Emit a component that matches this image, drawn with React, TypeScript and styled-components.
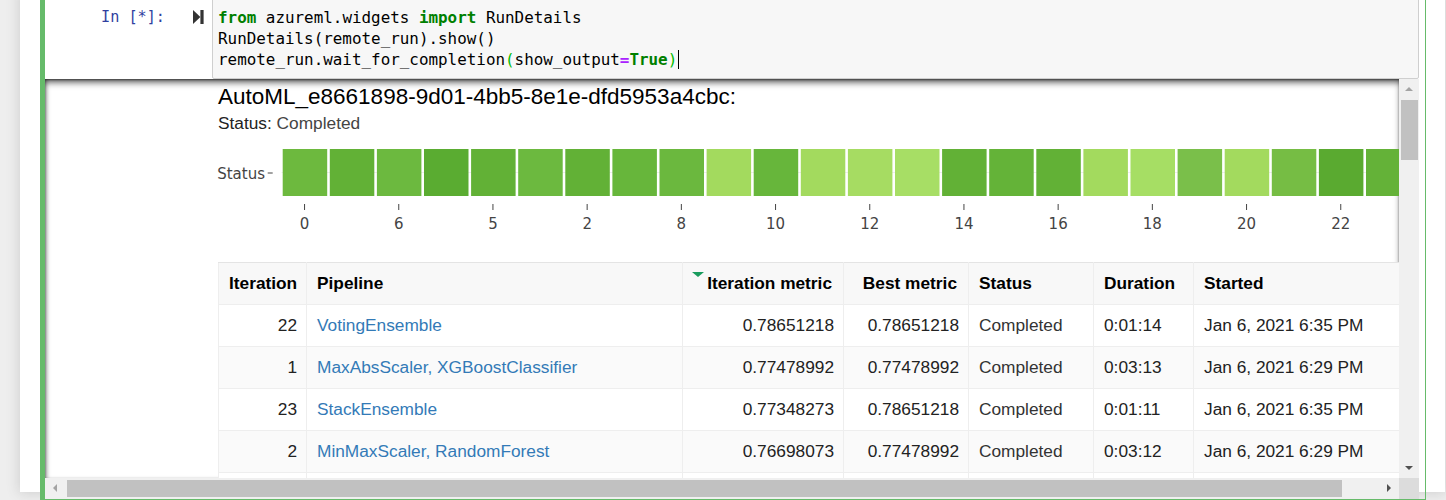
import styled, { createGlobalStyle } from 'styled-components';

const GlobalStyle = createGlobalStyle`
	html, body {
		margin: 0;
		padding: 0;
		background: #eee;
		overflow: hidden;
	}
	body {
		font-family: "Liberation Sans", Arial, sans-serif;
	}
`;

const Page = styled.div`
	height: 500px;
	overflow: hidden;
`;

const Notebook = styled.div`
	margin-left: 20px;
	width: 1425px;
	height: 100%;
	box-sizing: border-box;
	padding: 0 19px 0 20px;
	background: #fff;
	box-shadow: 0 0 12px 1px rgba(87, 87, 87, 0.2);
`;

const Cell = styled.div`
	margin-top: -8px;
	border: 1px solid #66bb6a;
	border-left: 5px solid #66bb6a;
	padding: 5px 6px 0 0;
`;

const InputRow = styled.div`
	display: flex;
`;

const Prompt = styled.div`
	flex: none;
	width: 167px;
	display: flex;
	align-items: flex-start;
	padding-top: 9px;
	box-sizing: border-box;
`;

const PromptText = styled.span`
	width: 120px;
	text-align: right;
	font-family: "DejaVu Sans Mono", monospace;
	font-size: 15.2px;
	line-height: 21px;
	color: #303f9f;
`;

const RunButton = styled.span`
	margin: 3px 0 0 28px;
	display: flex;
	color: #333;
`;

const InputArea = styled.div`
	flex: 1;
	background: #f7f7f7;
	border: 1px solid #cfcfcf;
	border-radius: 2px;
`;

const Code = styled.pre`
	margin: 0;
	padding: 8px 5px;
	font-family: "DejaVu Sans Mono", monospace;
	font-size: 15.9px;
	line-height: 21px;
	color: #000;
	white-space: pre;
`;

const Kw = styled.span`
	color: #008000;
	font-weight: bold;
`;

const Op = styled.span`
	color: #aa22ff;
	font-weight: bold;
`;

const Bracket = styled.span`
	color: #00bb00;
`;

const Cursor = styled.span`
	display: inline-block;
	width: 0;
	height: 19px;
	margin-left: 1px;
	border-left: 1px solid #000;
	vertical-align: -4px;
`;

const OutputFrame = styled.div`
	display: grid;
	grid-template-columns: 1fr 20px;
	grid-template-rows: 1fr 21px;
	height: 420px;
`;

const Viewport = styled.div`
	overflow: hidden;
	box-shadow: inset 0 5px 7px -2px rgba(0, 0, 0, 0.7), inset 0 1px 2px rgba(0, 0, 0, 0.4),
		inset 3px 0 4px -2px rgba(0, 0, 0, 0.35);
`;

const Content = styled.div`
	width: 1400px;
	box-sizing: border-box;
	padding: 5px 0 0 167px;
`;

const Title = styled.div`
	margin-left: 6px;
	font-size: 22.5px;
	line-height: 26px;
	color: #000;
`;

const StatusLine = styled.div`
	margin: 3px 0 0 6px;
	font-size: 17.3px;
	line-height: 20px;
	color: #222;

	span {
		color: #444;
	}
`;

const Plot = styled.svg`
	display: block;
	font-family: "DejaVu Sans", Verdana, sans-serif;
`;

const Table = styled.table`
	margin: 14px 0 0 6px;
	width: 1185px;
	border-collapse: collapse;
	table-layout: fixed;
	font-size: 17.3px;
	color: #222;
`;

const Th = styled.th<{ $right?: boolean }>`
	position: relative;
	height: 41px;
	padding: 0 ${(p) => (p.$right ? '11px' : '10px')};
	background: #f8f8f8;
	border: 1px solid #eee;
	border-top-color: #e4e4e4;
	color: #000;
	font-weight: bold;
	text-align: ${(p) => (p.$right ? 'right' : 'left')};
	white-space: nowrap;
`;

const Row = styled.tr<{ $alt: boolean }>`
	background: ${(p) => (p.$alt ? '#fafafa' : '#fff')};
`;

const Td = styled.td<{ $right?: boolean }>`
	height: 41px;
	padding: 0 ${(p) => (p.$right ? '9px' : '10px')};
	border: 1px solid #eee;
	text-align: ${(p) => (p.$right ? 'right' : 'left')};
	white-space: nowrap;
	overflow: hidden;
`;

const Link = styled.a`
	color: #337ab7;
	text-decoration: none;
`;

const StatusText = styled.span`
	color: #333;
`;

const SortMark = styled.span`
	position: absolute;
	left: 9px;
	top: 9px;
	border-left: 6.5px solid transparent;
	border-right: 6.5px solid transparent;
	border-top: 5px solid #1a9c5e;
`;

const VScroll = styled.div`
	display: flex;
	flex-direction: column;
	background: #f0f0f0;
`;

const HScroll = styled.div`
	display: flex;
	background: #f0f0f0;
`;

const Corner = styled.div`
	background: #dcdcdc;
`;

const ArrowButton = styled.div`
	flex: none;
	width: 20px;
	height: 20px;
	display: flex;
	align-items: center;
	justify-content: center;
`;

const Arrow = styled.span<{ $dir: 'up' | 'down' | 'left' | 'right'; $active?: boolean }>`
	width: 0;
	height: 0;
	border: 4px solid transparent;
	${(p) => {
		const c = p.$active ? '#505050' : '#a3a3a3';
		if (p.$dir === 'up') return `border-bottom-color: ${c}; border-top-width: 0;`;
		if (p.$dir === 'down') return `border-top-color: ${c}; border-bottom-width: 0;`;
		if (p.$dir === 'left') return `border-right-color: ${c}; border-left-width: 0;`;
		return `border-left-color: ${c}; border-right-width: 0;`;
	}}
`;

const VThumb = styled.div`
	height: 60px;
	margin: 1px 1px 0 2px;
	background: #c1c1c1;
`;

const HThumb = styled.div`
	width: 1275px;
	margin: 2px 0 2px 2px;
	background: #c1c1c1;
`;

const Spacer = styled.div`
	flex: 1;
`;

const cellColors = [
	'#6db93e', '#62b136', '#6cb93f', '#5aac31', '#62b136', '#6cb93f',
	'#62b136', '#67b63b', '#6bb83e', '#a3da5e', '#67b63b', '#a3da5e',
	'#a6dc62', '#a7de65', '#62b136', '#64b338', '#62b136', '#a3da5e',
	'#a6de64', '#7abf4a', '#a3da5e', '#76bd44', '#5aaa30', '#64b238',
];

const tickLabels = ['0', '6', '5', '2', '8', '10', '12', '14', '16', '18', '20', '22'];

const CELL_X = 69.5;
const PITCH = 47.1;

const runs = [
	{ it: 22, pipe: 'VotingEnsemble', metric: '0.78651218', best: '0.78651218', dur: '0:01:14', start: 'Jan 6, 2021 6:35 PM' },
	{ it: 1, pipe: 'MaxAbsScaler, XGBoostClassifier', metric: '0.77478992', best: '0.77478992', dur: '0:03:13', start: 'Jan 6, 2021 6:29 PM' },
	{ it: 23, pipe: 'StackEnsemble', metric: '0.77348273', best: '0.78651218', dur: '0:01:11', start: 'Jan 6, 2021 6:35 PM' },
	{ it: 2, pipe: 'MinMaxScaler, RandomForest', metric: '0.76698073', best: '0.77478992', dur: '0:03:12', start: 'Jan 6, 2021 6:29 PM' },
	{ it: 0, pipe: 'MaxAbsScaler, LightGBM', metric: '0.76642247', best: '0.76642247', dur: '0:03:05', start: 'Jan 6, 2021 6:28 PM' },
	{ it: 6, pipe: 'SparseNormalizer, XGBoostClassifier', metric: '0.76421385', best: '0.77478992', dur: '0:03:20', start: 'Jan 6, 2021 6:30 PM' },
];

const StatusPlot = () => (
	<Plot width={1233} height={115}>
		<line x1={CELL_X} x2={CELL_X + PITCH * cellColors.length} y1={39.5} y2={39.5} stroke="#eee" />
		{cellColors.map((color, i) => (
			<rect key={i} x={CELL_X + i * PITCH + 1.2} y={16} width={PITCH - 2.6} height={47} fill={color} />
		))}
		<line x1={55.7} x2={60.7} y1={40} y2={40} stroke="#444" />
		<text x={53} y={45.5} fontSize={15} fill="#444" textAnchor="end">
			Status
		</text>
		{tickLabels.map((label, k) => {
			const cx = CELL_X + k * 2 * PITCH + PITCH / 2 - 0.5;
			return (
				<g key={label}>
					<line x1={cx} x2={cx} y1={71} y2={77} stroke="#444" />
					<text x={cx} y={95.5} fontSize={15} fill="#444" textAnchor="middle">
						{label}
					</text>
				</g>
			);
		})}
	</Plot>
);

const RunIcon = () => (
	<svg width="11" height="14" viewBox="0 0 11 14">
		<polygon points="0,0 7.4,7 0,14" fill="currentColor" />
		<rect x="7.4" y="0" width="3.2" height="14" fill="currentColor" />
	</svg>
);

const App = () => {
	return (
		<Page>
			<GlobalStyle />
			<Notebook>
				<Cell>
					<InputRow>
						<Prompt>
							<PromptText>In [*]:</PromptText>
							<RunButton>
								<RunIcon />
							</RunButton>
						</Prompt>
						<InputArea>
							<Code>
								<Kw>from</Kw> azureml.widgets <Kw>import</Kw> RunDetails{'\n'}
								RunDetails(remote_run).show(){'\n'}
								remote_run.wait_for_completion<Bracket>(</Bracket>show_output<Op>=</Op>
								<Kw>True</Kw>
								<Bracket>)</Bracket>
								<Cursor />
							</Code>
						</InputArea>
					</InputRow>
					<OutputFrame>
						<Viewport>
							<Content>
								<Title>AutoML_e8661898-9d01-4bb5-8e1e-dfd5953a4cbc:</Title>
								<StatusLine>
									Status: <span>Completed</span>
								</StatusLine>
								<StatusPlot />
								<Table>
									<colgroup>
										<col style={{ width: 88 }} />
										<col style={{ width: 376 }} />
										<col style={{ width: 161 }} />
										<col style={{ width: 125 }} />
										<col style={{ width: 125 }} />
										<col style={{ width: 100 }} />
										<col style={{ width: 210 }} />
									</colgroup>
									<thead>
										<tr>
											<Th>Iteration</Th>
											<Th>Pipeline</Th>
											<Th $right>
												<SortMark />
												Iteration metric
											</Th>
											<Th $right>Best metric</Th>
											<Th>Status</Th>
											<Th>Duration</Th>
											<Th>Started</Th>
										</tr>
									</thead>
									<tbody>
										{runs.map((run, i) => (
											<Row key={run.it} $alt={i % 2 === 1}>
												<Td $right>{run.it}</Td>
												<Td>
													<Link href="#">{run.pipe}</Link>
												</Td>
												<Td $right>{run.metric}</Td>
												<Td $right>{run.best}</Td>
												<Td>
													<StatusText>Completed</StatusText>
												</Td>
												<Td>{run.dur}</Td>
												<Td>{run.start}</Td>
											</Row>
										))}
									</tbody>
								</Table>
							</Content>
						</Viewport>
						<VScroll>
							<ArrowButton>
								<Arrow $dir="up" />
							</ArrowButton>
							<VThumb />
							<Spacer />
							<ArrowButton>
								<Arrow $dir="down" $active />
							</ArrowButton>
						</VScroll>
						<HScroll>
							<ArrowButton>
								<Arrow $dir="left" />
							</ArrowButton>
							<HThumb />
							<Spacer />
							<ArrowButton>
								<Arrow $dir="right" $active />
							</ArrowButton>
						</HScroll>
						<Corner />
					</OutputFrame>
				</Cell>
			</Notebook>
		</Page>
	);
};

export default App;
